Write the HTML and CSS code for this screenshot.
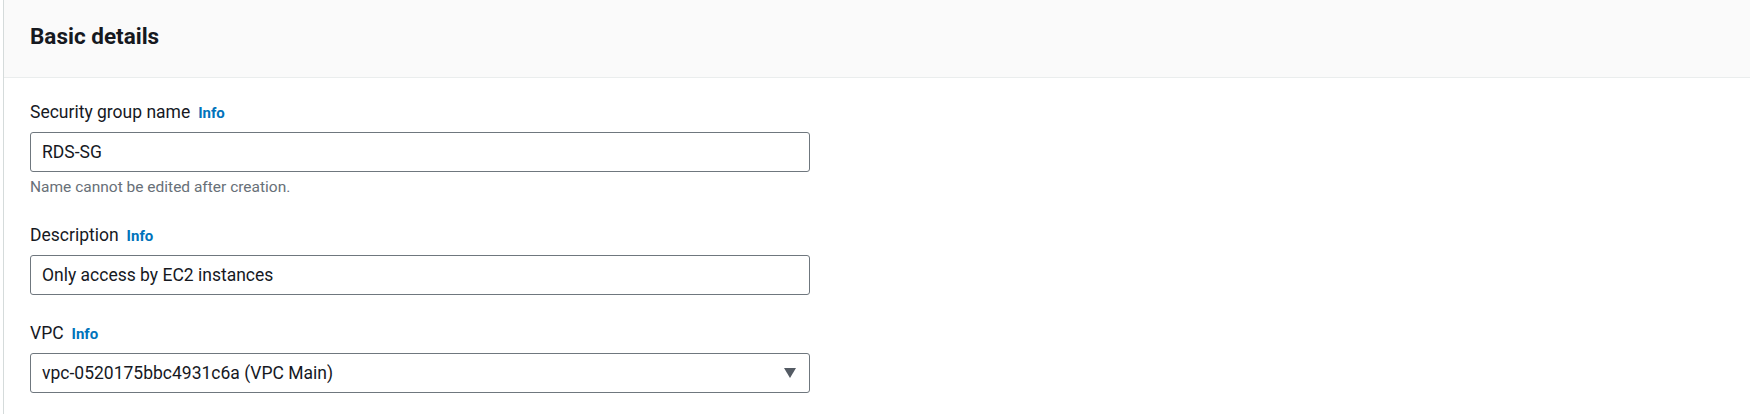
FILE: index.html
```html
<!DOCTYPE html>
<html lang="en">
<head>
<meta charset="utf-8">
<title>Basic details</title>
<link rel="stylesheet" href="styles.css">
</head>
<body>
<section class="panel">
  <header class="panel-header">
    <h2 class="panel-title">Basic details</h2>
  </header>
  <div class="panel-body">
    <div class="field">
      <label class="field-label">Security group name<a class="info" href="#">Info</a></label>
      <div class="input">RDS-SG</div>
      <div class="hint">Name cannot be edited after creation.</div>
    </div>
    <div class="field">
      <label class="field-label">Description<a class="info" href="#">Info</a></label>
      <div class="input">Only access by EC2 instances</div>
    </div>
    <div class="field">
      <label class="field-label">VPC<a class="info" href="#">Info</a></label>
      <div class="input select">
        <span>vpc-0520175bbc4931c6a (VPC Main)</span>
        <span class="caret"></span>
      </div>
    </div>
  </div>
</section>
</body>
</html>
```
FILE: styles.css
```css
html, body {
  margin: 0;
  padding: 0;
  background: #ffffff;
}

body {
  font-family: Roboto, "Liberation Sans", Arial, sans-serif;
  color: #16191f;
  width: 1750px;
  height: 414px;
  overflow: hidden;
}

.panel {
  margin-left: 3px;
  border-left: 1px solid #d5dbdb;
  min-height: 414px;
}

.panel-header {
  background: #fafafa;
  border-bottom: 1px solid #eaeded;
  padding: 22px 26px 27px;
}

.panel-title {
  margin: 0;
  font-size: 22.5px;
  line-height: 28px;
  font-weight: 700;
  color: #16191f;
}

.panel-body {
  padding: 23px 26px 0;
  display: flex;
  flex-direction: column;
  gap: 27px;
}

.field {
  display: flex;
  flex-direction: column;
  width: 780px;
}

.field-label {
  font-size: 17.5px;
  line-height: 22px;
  color: #16191f;
  margin-bottom: 8px;
}

.info {
  margin-left: 8px;
  font-size: 15px;
  font-weight: 700;
  color: #0073bb;
  text-decoration: none;
}

.input {
  box-sizing: border-box;
  height: 40px;
  border: 1px solid #6f777e;
  border-radius: 3px;
  padding: 0 11px;
  display: flex;
  align-items: center;
  font-size: 17.5px;
  color: #16191f;
}

.select {
  justify-content: space-between;
  padding-right: 13px;
}

.caret {
  width: 0;
  height: 0;
  border-left: 6px solid transparent;
  border-right: 6px solid transparent;
  border-top: 10px solid #545b64;
}

.hint {
  margin-top: 5px;
  font-size: 15.5px;
  line-height: 20px;
  color: #687078;
}
```
